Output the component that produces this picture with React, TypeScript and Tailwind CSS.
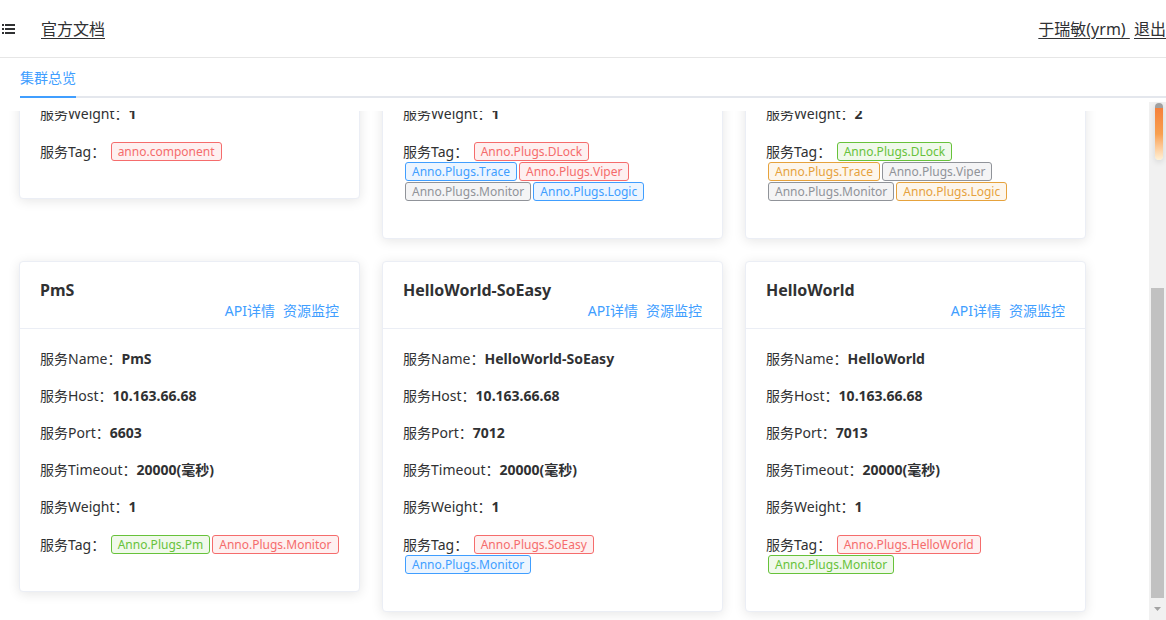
import React, { useLayoutEffect, useRef } from 'react';

type TagType = 'danger' | 'primary' | 'info' | 'success' | 'warning';

interface Service {
  name: string;
  host: string;
  port: string;
  timeout: string;
  weight: string;
  tags: { label: string; type: TagType }[];
}

const TAG_STYLES: Record<TagType, string> = {
  danger: 'border-[#f56c6c] text-[#f56c6c] bg-[#fef0f0]',
  primary: 'border-[#409eff] text-[#409eff] bg-[#ecf5ff]',
  info: 'border-[#909399] text-[#909399] bg-[#f4f4f5]',
  success: 'border-[#67c23a] text-[#67c23a] bg-[#f0f9eb]',
  warning: 'border-[#e6a23c] text-[#e6a23c] bg-[#fdf6ec]',
};

const SERVICES: Service[] = [
  {
    name: 'AnnoComponent',
    host: '10.163.66.68',
    port: '6660',
    timeout: '20000(毫秒)',
    weight: '1',
    tags: [{ label: 'anno.component', type: 'danger' }],
  },
  {
    name: 'AnnoService',
    host: '10.163.66.68',
    port: '6659',
    timeout: '20000(毫秒)',
    weight: '1',
    tags: [
      { label: 'Anno.Plugs.DLock', type: 'danger' },
      { label: 'Anno.Plugs.Trace', type: 'primary' },
      { label: 'Anno.Plugs.Viper', type: 'danger' },
      { label: 'Anno.Plugs.Monitor', type: 'info' },
      { label: 'Anno.Plugs.Logic', type: 'primary' },
    ],
  },
  {
    name: 'AnnoService',
    host: '10.163.66.69',
    port: '6659',
    timeout: '20000(毫秒)',
    weight: '2',
    tags: [
      { label: 'Anno.Plugs.DLock', type: 'success' },
      { label: 'Anno.Plugs.Trace', type: 'warning' },
      { label: 'Anno.Plugs.Viper', type: 'info' },
      { label: 'Anno.Plugs.Monitor', type: 'info' },
      { label: 'Anno.Plugs.Logic', type: 'warning' },
    ],
  },
  {
    name: 'PmS',
    host: '10.163.66.68',
    port: '6603',
    timeout: '20000(毫秒)',
    weight: '1',
    tags: [
      { label: 'Anno.Plugs.Pm', type: 'success' },
      { label: 'Anno.Plugs.Monitor', type: 'danger' },
    ],
  },
  {
    name: 'HelloWorld-SoEasy',
    host: '10.163.66.68',
    port: '7012',
    timeout: '20000(毫秒)',
    weight: '1',
    tags: [
      { label: 'Anno.Plugs.SoEasy', type: 'danger' },
      { label: 'Anno.Plugs.Monitor', type: 'primary' },
    ],
  },
  {
    name: 'HelloWorld',
    host: '10.163.66.68',
    port: '7013',
    timeout: '20000(毫秒)',
    weight: '1',
    tags: [
      { label: 'Anno.Plugs.HelloWorld', type: 'danger' },
      { label: 'Anno.Plugs.Monitor', type: 'success' },
    ],
  },
];

const Row: React.FC<{ label: string; value: string }> = ({ label, value }) => (
  <div className="leading-[21px]">
    服务{label}：<span className="font-bold">{value}</span>
  </div>
);

const ServiceCard: React.FC<{ s: Service }> = ({ s }) => (
  <div className="w-[341px] bg-white border border-[#ebeef5] rounded-[4px] shadow-[0_2px_12px_0_rgba(0,0,0,0.1)]">
    {/* Card header */}
    <div className="px-[20px] pt-[18px] pb-[7px] border-b border-[#ebeef5]">
      <div className="text-[16px] font-bold leading-[20px] text-[#303133]">{s.name}</div>
      <div className="flex justify-end gap-[8px] text-[14px] leading-[21px] text-[#409eff]">
        <a className="cursor-pointer">API详情</a>
        <a className="cursor-pointer">资源监控</a>
      </div>
    </div>

    {/* Card body */}
    <div className="px-[20px] pt-[19px] pb-[37px] text-[14px] text-[#303133] flex flex-col gap-[16px]">
      <Row label="Name" value={s.name} />
      <Row label="Host" value={s.host} />
      <Row label="Port" value={s.port} />
      <Row label="Timeout" value={s.timeout} />
      <Row label="Weight" value={s.weight} />
      <div className="mt-[2px] flex flex-wrap items-center gap-y-[1px]">
        <span className="leading-[19px] mr-[3.5px]">服务Tag：</span>
        {s.tags.map((t, i) => (
          <span
            key={i}
            className={`h-[19px] leading-[17px] px-[6px] ml-[2px] border rounded-[3px] text-[12px] whitespace-nowrap [font-kerning:none] ${TAG_STYLES[t.type]}`}
          >
            {t.label}
          </span>
        ))}
      </div>
    </div>
  </div>
);

const App: React.FC = () => {
  const viewRef = useRef<HTMLDivElement>(null);

  // the list is shown scrolled down a bit
  useLayoutEffect(() => {
    if (viewRef.current) viewRef.current.scrollTop = 263;
  }, []);

  return (
    <div
      className="h-screen w-full bg-white flex flex-col overflow-hidden text-[#303133]"
      style={{ fontFamily: '"Noto Sans", "Noto Sans CJK SC", sans-serif' }}
    >
      {/* Header */}
      <header className="h-[58px] shrink-0 flex items-center justify-between border-b border-[#e6e6e6] text-[16px]">
        <div className="flex items-center">
          <svg width="13" height="10" viewBox="0 0 13 10" className="ml-[2px]">
            <rect x="0" y="0" width="2" height="2" fill="#303133" />
            <rect x="3" y="0" width="10" height="2" fill="#303133" />
            <rect x="0" y="4" width="2" height="2" fill="#303133" />
            <rect x="3" y="4" width="10" height="2" fill="#303133" />
            <rect x="0" y="8" width="2" height="2" fill="#303133" />
            <rect x="3" y="8" width="10" height="2" fill="#303133" />
          </svg>
          <a className="ml-[26px] underline underline-offset-[3px] cursor-pointer">官方文档</a>
        </div>
        <div className="whitespace-nowrap">
          <a className="underline underline-offset-[3px] cursor-pointer">于瑞敏(yrm)&nbsp;</a>{' '}
          <a className="underline underline-offset-[3px] cursor-pointer">退出</a>
        </div>
      </header>

      {/* Tabs */}
      <div className="h-[40px] shrink-0 ml-[20px] flex border-b-2 border-[#e4e7ed]">
        <div className="h-[40px] -mb-[2px] flex items-center border-b-2 border-[#409eff] text-[14px] text-[#409eff]">
          集群总览
        </div>
      </div>

      <div className="flex-1 flex min-h-0">
        {/* Card list */}
        <div ref={viewRef} className="flex-1 mt-[13px] overflow-hidden">
          <div className="pl-[19px] pt-[20px] pb-[40px] flex flex-wrap items-start gap-x-[22px] gap-y-[22px]">
            {SERVICES.map((s, i) => (
              <ServiceCard key={i} s={s} />
            ))}
          </div>
        </div>

        {/* Scrollbar */}
        <div className="w-[17px] shrink-0 mt-[4px] bg-[#f1f1f1] flex flex-col">
          <div className="ml-[6px] mt-[1px] w-[8px] h-[57px] rounded-full overflow-hidden shadow-[0_2px_6px_rgba(0,0,0,0.12)] flex flex-col">
            <div className="h-[5px] bg-[#a0a0a0]" />
            <div className="flex-1 bg-gradient-to-b from-[#f5803a] via-[#f8a050] to-[#fff1d6]" />
          </div>
          <div className="flex-1" />
          <div className="ml-[2px] w-[13px] h-[310px] bg-[#c1c1c1]" />
          <div className="h-[22px] flex items-center justify-center">
            <svg width="7" height="4" viewBox="0 0 7 4">
              <path d="M0 0 H7 L3.5 4 Z" fill="#a3a3a3" />
            </svg>
          </div>
        </div>
      </div>
    </div>
  );
};

export default App;
